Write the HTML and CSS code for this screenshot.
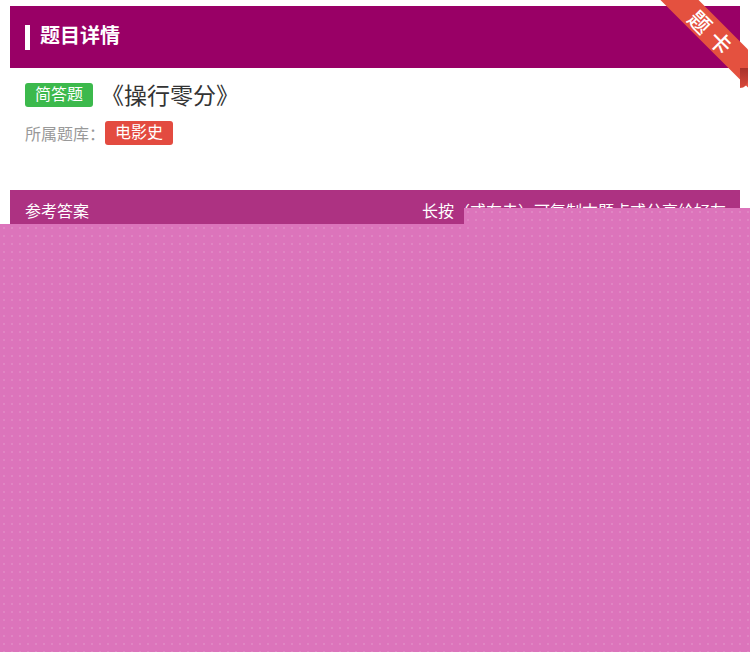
FILE: index.html
```html
<!DOCTYPE html>
<html lang="zh">
<head>
<meta charset="utf-8">
<link rel="stylesheet" href="styles.css">
</head>
<body>
<div class="page">
  <div class="header">
    <span class="bar"></span>
    <h1 class="title">题目详情</h1>
    <div class="ribbon">
      <div class="strip">题卡</div>
      <div class="fold"></div>
    </div>
  </div>
  <div class="question">
    <div class="q-row">
      <span class="tag tag-green">简答题</span>
      <span class="q-title">《操行零分》</span>
    </div>
    <div class="q-meta">
      <span class="meta-label">所属题库：</span>
      <span class="tag tag-red">电影史</span>
    </div>
  </div>
  <div class="answer-bar">
    <span>参考答案</span>
    <span>长按（或右击）可复制本题点或分享给好友</span>
  </div>
</div>
<div class="overlay overlay-top"></div>
<div class="overlay overlay-main"></div>
</body>
</html>
```

FILE: styles.css
```css
html, body {
  margin: 0;
  padding: 0;
}
body {
  width: 750px;
  height: 652px;
  overflow: hidden;
  position: relative;
  background: #fff;
  font-family: "Noto Sans CJK SC", "Noto Sans", sans-serif;
}
.page {
  padding: 6px 10px 0;
}
.header {
  position: relative;
  height: 62px;
  background: #990066;
  display: flex;
  align-items: center;
  padding-left: 15px;
}
.bar {
  width: 5px;
  height: 25px;
  background: #fff;
  margin-right: 10px;
  margin-top: 0;
}
.title {
  margin: 0 0 5px;
  color: #fff;
  font-size: 20px;
  font-weight: bold;
  line-height: 1;
}
.ribbon {
  position: absolute;
  top: -6px;
  right: -8px;
  width: 100px;
  height: 88px;
  overflow: hidden;
}
.strip {
  position: absolute;
  left: -17px;
  top: 18px;
  width: 160px;
  height: 27px;
  line-height: 27px;
  background: #e4513f;
  color: #fff;
  font-size: 22px;
  font-weight: 500;
  text-align: center;
  letter-spacing: 7px;
  padding-left: 7px;
  box-sizing: border-box;
  transform: rotate(45deg);
}
.fold {
  position: absolute;
  left: 92px;
  top: 68px;
  width: 8px;
  height: 20px;
  background: linear-gradient(#a8302a, #d8493b);
  border-bottom-right-radius: 8px;
}
.question {
  padding: 11px 15px 0;
  height: 108px;
  box-sizing: border-box;
}
.q-row {
  display: flex;
  align-items: center;
  height: 30px;
}
.tag {
  display: inline-block;
  color: #fff;
  font-size: 16px;
  line-height: 20px;
  padding: 0 10px 4px;
  border-radius: 3px;
}
.tag-green {
  background: #3cb94c;
  margin-top: 2px;
}
.tag-red {
  background: #e34b40;
}
.q-title {
  margin-left: 8px;
  font-size: 23px;
  color: #333;
  line-height: 30px;
}
.q-meta {
  display: flex;
  align-items: center;
  margin-top: 12px;
}
.meta-label {
  font-size: 16px;
  color: #999;
  line-height: 24px;
}
.answer-bar {
  margin-top: 14px;
  height: 44px;
  background: #ad3282;
  color: #fff;
  font-size: 16px;
  display: flex;
  justify-content: space-between;
  padding: 8px 14px 0 15px;
  box-sizing: border-box;
  line-height: 24px;
}
.overlay {
  position: absolute;
  right: 0;
  bottom: 0;
  background-color: #dc74bb;
  background-image: radial-gradient(circle, rgba(255,255,255,0.12) 0.8px, transparent 1.2px);
  background-size: 8px 8px;
}
.overlay-top {
  left: 464px;
  top: 208px;
}
.overlay-main {
  left: 0;
  top: 224px;
}
```
